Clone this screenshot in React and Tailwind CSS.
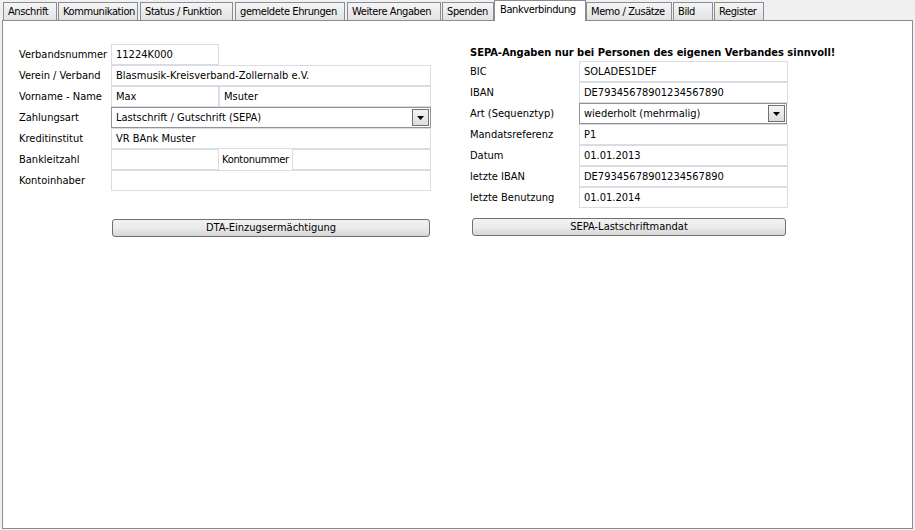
const tabs = [
  { label: "Anschrift", cls: "w-[54px]" },
  { label: "Kommunikation", cls: "w-[80px] ml-px" },
  { label: "Status / Funktion", cls: "w-[93px] ml-[2px]" },
  { label: "gemeldete Ehrungen", cls: "w-[110px] ml-[2px]" },
  { label: "Weitere Angaben", cls: "w-[94px] ml-[2px]" },
  { label: "Spenden", cls: "w-[52px] ml-px" },
  { label: "Bankverbindung", cls: "w-[92px]", active: true },
  { label: "Memo / Zusätze", cls: "w-[86px]" },
  { label: "Bild", cls: "w-[40px] ml-px" },
  { label: "Register", cls: "w-[50px] ml-px" },
];

const Input = ({ value, className = "" }) => (
  <div
    className={
      "h-[21px] border border-[#d8dde5] bg-white pl-[4px] leading-[19px] whitespace-nowrap overflow-hidden " +
      className
    }
  >
    {value}
  </div>
);

const Select = ({ value, className = "" }) => (
  <div
    className={
      "h-[21px] flex items-center justify-between border border-[#8f949b] bg-white pl-[4px] pr-px " +
      className
    }
  >
    <span className="whitespace-nowrap pt-px">{value}</span>
    <div className="w-[17px] h-[17px] border border-[#707070] bg-gradient-to-b from-[#f4f4f4] to-[#dcdcdc] flex items-center justify-center">
      <svg width="7" height="4" viewBox="0 0 7 4">
        <path d="M0 0h7L3.5 4z" fill="#000" />
      </svg>
    </div>
  </div>
);

const Row = ({ label, labelCls, children }) => (
  <div className="flex h-[21px]">
    <div className={"leading-[21px] whitespace-nowrap shrink-0 " + labelCls}>{label}</div>
    {children}
  </div>
);

const Button = ({ children, className = "" }) => (
  <button
    className={
      "h-[18px] rounded-[3px] border border-[#707070] bg-gradient-to-b from-[#f2f2f2] via-[#ebebeb] to-[#d6d6d6] text-center leading-[16px] " +
      className
    }
  >
    {children}
  </button>
);

export default function App() {
  return (
    <div
      className="w-[915px] h-[530px] bg-[#f0f0f0] text-[11px] text-black overflow-hidden"
      style={{ fontFamily: '"DejaVu Sans Condensed", "Liberation Sans", sans-serif' }}
    >
      <div className="relative z-10 flex items-end h-[20px] pl-[3px] tracking-[-0.4px]">
        {tabs.map((t) =>
          t.active ? (
            <div
              key={t.label}
              className={
                "h-[21px] -mb-px border border-b-0 border-[#898c95] bg-white pl-[5px] pt-[1px] leading-[16px] whitespace-nowrap " +
                t.cls
              }
            >
              {t.label}
            </div>
          ) : (
            <div
              key={t.label}
              className={
                "h-[18px] border border-b-0 border-[#898c95] bg-gradient-to-b from-[#f5f5f5] to-[#e2e2e2] pl-[4px] pt-[1px] leading-[16px] whitespace-nowrap overflow-hidden " +
                t.cls
              }
            >
              {t.label}
            </div>
          )
        )}
      </div>

      <div className="ml-[2px] w-[911px] h-[509px] border border-[#898c95] bg-white">
        <div className="flex pt-[23px] pl-[16px]">
          <div className="w-[412px] flex flex-col">
            <Row label="Verbandsnummer" labelCls="w-[92px]">
              <Input value="11224K000" className="w-[108px]" />
            </Row>
            <Row label="Verein / Verband" labelCls="w-[92px]">
              <Input value="Blasmusik-Kreisverband-Zollernalb e.V." className="w-[320px]" />
            </Row>
            <Row label="Vorname - Name" labelCls="w-[92px]">
              <Input value="Max" className="w-[108px]" />
              <Input value="Msuter" className="w-[212px]" />
            </Row>
            <Row label="Zahlungsart" labelCls="w-[92px]">
              <Select value="Lastschrift / Gutschrift (SEPA)" className="w-[320px]" />
            </Row>
            <Row label="Kreditinstitut" labelCls="w-[92px]">
              <Input value="VR BAnk Muster" className="w-[320px]" />
            </Row>
            <Row label="Bankleitzahl" labelCls="w-[92px]">
              <Input value="" className="w-[108px]" />
              <div className="w-[73px] pl-[3px] leading-[21px] whitespace-nowrap tracking-[-0.3px]">Kontonummer</div>
              <Input value="" className="w-[139px]" />
            </Row>
            <Row label="Kontoinhaber" labelCls="w-[92px]">
              <Input value="" className="w-[320px]" />
            </Row>
            <Button className="mt-[28px] ml-[93px] w-[318px]">DTA-Einzugsermächtigung</Button>
          </div>

          <div className="ml-[39px] w-[318px] flex flex-col">
            <div className="h-[17px] font-bold leading-[17px] whitespace-nowrap">
              SEPA-Angaben nur bei Personen des eigenen Verbandes sinnvoll!
            </div>
            <Row label="BIC" labelCls="w-[109px]">
              <Input value="SOLADES1DEF" className="w-[209px]" />
            </Row>
            <Row label="IBAN" labelCls="w-[109px]">
              <Input value="DE79345678901234567890" className="w-[209px]" />
            </Row>
            <Row label="Art (Sequenztyp)" labelCls="w-[109px]">
              <Select value="wiederholt (mehrmalig)" className="w-[208px]" />
            </Row>
            <Row label="Mandatsreferenz" labelCls="w-[109px]">
              <Input value="P1" className="w-[209px]" />
            </Row>
            <Row label="Datum" labelCls="w-[109px]">
              <Input value="01.01.2013" className="w-[209px]" />
            </Row>
            <Row label="letzte IBAN" labelCls="w-[109px]">
              <Input value="DE79345678901234567890" className="w-[209px]" />
            </Row>
            <Row label="letzte Benutzung" labelCls="w-[109px]">
              <Input value="01.01.2014" className="w-[209px]" />
            </Row>
            <Button className="mt-[10px] ml-[2px] w-[314px]">SEPA-Lastschriftmandat</Button>
          </div>
        </div>
      </div>
    </div>
  );
}
